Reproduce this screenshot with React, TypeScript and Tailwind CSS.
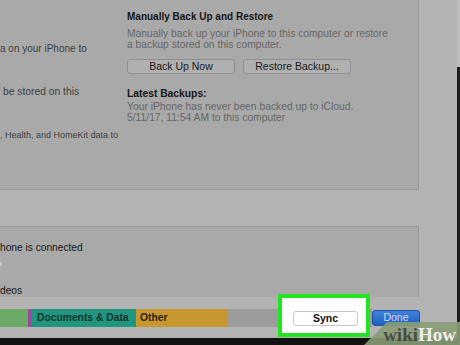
export default function App() {
  return (
    <div className="relative flex h-[345px] w-[460px] overflow-hidden bg-[#b3b3b3] font-['Liberation_Sans',Arial,sans-serif]">
      <div className="flex w-[457px] flex-col">
        {/* backup panel */}
        <div className="flex h-[190px] w-[419px] border-r border-b border-[#989898] bg-[#a9a9a9] pt-[10px]">
          <div className="flex w-[127px] flex-col text-[#3e3e3e]">
            <div className="mt-[33px] text-[10px] leading-[12px] whitespace-nowrap">a on your iPhone to</div>
            <div className="mt-[31px] pl-[3px] text-[10.3px] leading-[12px] whitespace-nowrap">be stored on this</div>
            <div className="mt-[31px] text-[9px] leading-[12px] whitespace-nowrap">, Health, and HomeKit data to</div>
          </div>
          <div className="flex flex-1 flex-col">
            <div className="text-[10px] leading-[14px] font-bold text-[#161616]">Manually Back Up and Restore</div>
            <div className="mt-[4px] text-[10.3px] leading-[11px] text-[#666666] whitespace-nowrap">
              Manually back up your iPhone to this computer or restore
              <br />a backup stored on this computer.
            </div>
            <div className="mt-[9px] flex gap-[8px]">
              <button className="flex h-[15px] w-[108px] items-center justify-center rounded-[3px] border border-[#8f8f8f] bg-[#b0b0b0] text-[10.5px] text-[#1a1a1a]">
                Back Up Now
              </button>
              <button className="flex h-[15px] w-[108px] items-center justify-center rounded-[3px] border border-[#8f8f8f] bg-[#b0b0b0] text-[10.5px] text-[#1a1a1a]">
                Restore Backup...
              </button>
            </div>
            <div className="mt-[13px] text-[10.3px] leading-[14px] font-bold text-[#161616]">Latest Backups:</div>
            <div className="text-[10.3px] leading-[11px] text-[#666666] whitespace-nowrap">
              Your iPhone has never been backed up to iCloud.
              <br />5/11/17, 11:54 AM to this computer
            </div>
          </div>
        </div>

        {/* options panel */}
        <div className="mt-[36px] flex h-[71px] w-[419px] flex-col border-t border-r border-[#989898] bg-[#a9a9a9] pt-[15px] text-[10.2px] leading-[12px] text-[#161616]">
          <div className="whitespace-nowrap">hone is connected</div>
          <div className="mt-[8px] h-[8px] w-[2px] bg-[#c4c4c4]" />
          <div className="mt-[19px] whitespace-nowrap">deos</div>
        </div>

        {/* storage bar + buttons */}
        <div className="flex h-[41px] items-center pt-[1px]">
          <div className="flex h-[18px] w-[372px] items-stretch text-[10.3px] font-bold text-[#17332c]">
            <div className="w-[28px] bg-[#6cab66]" />
            <div className="w-[3px] bg-[#9a4c98]" />
            <div className="flex w-[105px] items-center bg-[#21967f] pl-[6px] whitespace-nowrap">Documents &amp; Data</div>
            <div className="flex w-[92px] items-center bg-[#c6982f] pl-[4px] text-[#2a2210]">Other</div>
            <div className="flex-1 bg-[#9c9c9c]" />
          </div>
          <button className="flex h-[16px] w-[48px] items-center justify-center rounded-[3px] border border-[#1c4f9e] bg-gradient-to-b from-[#3f83dc] to-[#1f5fbf] text-[10.5px] text-[#d3deef]">
            Done
          </button>
        </div>
        <div className="h-[7px] bg-[#121212]" />
      </div>

      {/* right edge */}
      <div className="flex w-[3px] flex-col">
        <div className="h-[67px] bg-[#bdbdbd]" />
        <div className="flex-1 bg-[#1c1c1c]" />
      </div>

      {/* highlight around Sync */}
      <div className="absolute top-[294px] left-[278px] h-[43px] w-[92px] border-[4px] border-[#22e51f] bg-white">
        <button className="mt-[13px] ml-[11px] flex h-[15px] w-[65px] items-center justify-center rounded-[3px] border border-[#c6c6c6] bg-white text-[10.5px] font-semibold text-[#111111]">
          Sync
        </button>
      </div>

      {/* watermark */}
      <div className="absolute top-[322px] left-[364px] flex h-[23px] w-[96px] items-end justify-end bg-[#8a9c78]/90 pr-[4px] pb-[1px] [clip-path:polygon(23px_0,100%_0,100%_100%,0_100%)]">
        <span className="font-['Liberation_Serif',Georgia,serif] text-[19px] leading-[19px] font-bold">
          <span className="text-[#474c44]">wiki</span>
          <span className="text-[#eef0ea]">How</span>
        </span>
      </div>
    </div>
  );
}
